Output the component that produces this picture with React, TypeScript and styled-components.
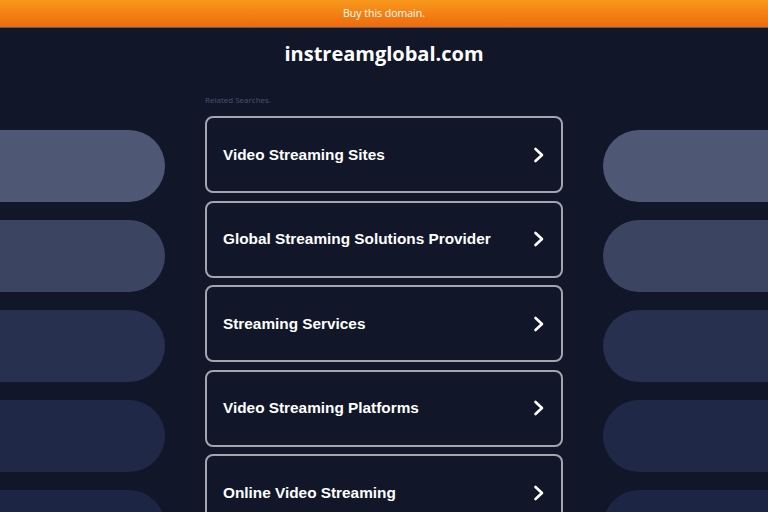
import React from 'react'
import styled, { createGlobalStyle } from 'styled-components'

const searches: string[] = [
    'Video Streaming Sites',
    'Global Streaming Solutions Provider',
    'Streaming Services',
    'Video Streaming Platforms',
    'Online Video Streaming',
]

const pillColors: string[] = ['#4e5874', '#3b4562', '#27304f', '#1f2847', '#1c2544']

const GlobalStyle = createGlobalStyle`
    html, body {
        margin: 0;
        padding: 0;
        background: #111729;
        overflow: hidden;
    }
    * {
        box-sizing: border-box;
    }
`

export default function App() {
    return (
        <Page>
            <GlobalStyle />
            <TopBar>Buy this domain.</TopBar>
            <Title>instreamglobal.com</Title>
            <Main>
                <SideColumn>
                    {pillColors.map((c) => (
                        <Pill key={c} $color={c} $side="left" />
                    ))}
                </SideColumn>
                <Center>
                    <Related>Related Searches.</Related>
                    <List>
                        {searches.map((s) => (
                            <Card key={s}>
                                <CardText>{s}</CardText>
                                <Chevron viewBox="0 0 12 16">
                                    <path d="M2.5 2 L9 8 L2.5 14" />
                                </Chevron>
                            </Card>
                        ))}
                    </List>
                </Center>
                <SideColumn>
                    {pillColors.map((c) => (
                        <Pill key={c} $color={c} $side="right" />
                    ))}
                </SideColumn>
            </Main>
        </Page>
    )
}

const Page = styled.div`
    width: 768px;
    height: 512px;
    overflow: hidden;
    background: #111729;
`

const TopBar = styled.div`
    height: 28px;
    display: flex;
    align-items: center;
    justify-content: center;
    background: linear-gradient(#f8991c, #ef6a0c);
    border-bottom: 1px solid #5b5f6c;
    color: #fff;
    font-family: 'Open Sans', sans-serif;
    font-size: 10.5px;
    padding-bottom: 1px;
`

const Title = styled.h1`
    margin: 13px 0 0;
    text-align: center;
    color: #fff;
    font-family: 'Open Sans', sans-serif;
    font-weight: 700;
    font-size: 20px;
    line-height: 26px;
`

const Main = styled.div`
    display: grid;
    grid-template-columns: 165px 358px 165px;
    column-gap: 40px;
    margin-top: 19px;
`

const SideColumn = styled.div`
    display: flex;
    flex-direction: column;
    gap: 18px;
    padding-top: 44px;
`

const Pill = styled.div<{ $color: string; $side: 'left' | 'right' }>`
    height: 72px;
    width: 100%;
    background: ${(p) => p.$color};
    border-radius: ${(p) => (p.$side === 'left' ? '0 36px 36px 0' : '36px 0 0 36px')};
`

const Center = styled.div`
    display: flex;
    flex-direction: column;
    padding-top: 8px;
`

const Related = styled.div`
    font-family: 'Open Sans', sans-serif;
    font-size: 8px;
    color: #4b5373;
    height: 22px;
    line-height: 12px;
`

const List = styled.div`
    display: flex;
    flex-direction: column;
    gap: 7.5px;
`

const Card = styled.div`
    height: 77px;
    border: 2px solid #a2a5ae;
    border-radius: 8px;
    display: flex;
    align-items: center;
    justify-content: space-between;
    padding: 0 16px 0 16px;
`

const CardText = styled.span`
    font-family: 'Liberation Sans', Arial, sans-serif;
    font-weight: 700;
    font-size: 15.35px;
    color: #fff;
`

const Chevron = styled.svg`
    width: 12px;
    height: 16px;
    fill: none;
    stroke: #fff;
    stroke-width: 2.6;
    stroke-linecap: round;
    stroke-linejoin: round;
`
